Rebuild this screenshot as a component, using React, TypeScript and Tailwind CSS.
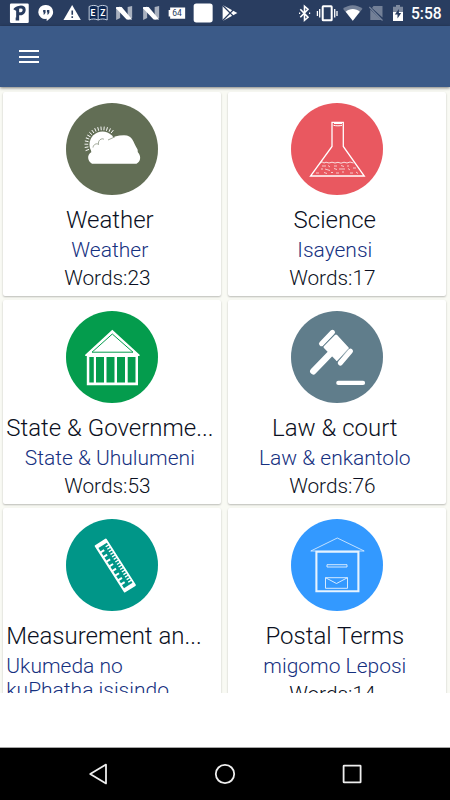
import type { ReactNode } from "react";
import clsx from "clsx";

type Category = {
    title: string;
    subtitle: string;
    words?: number;
    color: string;
    icon: ReactNode;
    alignLeft?: boolean;
};

const sunRays = Array.from({ length: 15 }, (_, i) => 160 + i * 10.5);
const longTicks = [9, 14.5, 20, 25.5, 31, 36.5, 42, 47];
const shortTicks = [7, 10, 13, 16, 19, 22, 25, 28, 31, 34, 37, 40, 43, 46, 49];

const WeatherIcon = () => (
    <g>
        {sunRays.map((a) => (
            <path key={a} d="M14.3 0H18" stroke="white" strokeWidth=".9" transform={`translate(36.5 41.5) rotate(${a})`} />
        ))}
        <circle cx="36.5" cy="41.5" r="13" fill="white" />
        <path
            d="M26 60.7C21.5 58 20.5 52 25.5 49C24 44 27 41 30.5 42C31.5 37 36 35.5 40 38C46 34 52 32.3 58 32.3C67 32.5 67 39 71 45.5C72.5 48 71 48.5 72.5 50C75.3 54 74.5 58.5 70.5 60.7Z"
            fill="white"
        />
        <path d="M27 44.5C27.5 41 31 40 32.5 41.5C31.5 37 36.5 34.5 38 36.5M42 37L49 33.8" fill="none" stroke="#626e55" strokeWidth=".6" />
    </g>
);

const ScienceIcon = () => (
    <g fill="none" stroke="white">
        <path d="M41 19.3H52.3V43.5L73.3 73H19.5L41 43.5Z" strokeWidth="1.3" />
        <path d="M42.5 22.3C45 23 49 23 51 22.3M43 20.5H51" strokeWidth="1" />
        <path d="M29.5 60L31 58.8L33 60L35 59.2L38 60L41 59.2L44 60L47 59.3L50 60.2L53 59.2L56 60L59 59L62.5 60" strokeWidth=".8" />
        <path
            d="M31 63H35M37 62.5L39 64M43 63H46M50 62.5L53 63.5M56 63H58M30 66H32M34 66L39 67.5M43 65.5L46 66.5M48 66H54M57 65.5L59 67M62 65H65M25 70H28M33 69.5L36 70.5M40 69.5H42M45 70H48M51 69H53M59 70H62M65 69L67 70.5"
            strokeWidth=".8"
            opacity=".85"
        />
    </g>
);

const StateIcon = () => (
    <g>
        <path d="M46.3 18.7L73.6 43.8V45H72V74.3H20.8V45H19.2V43.8Z" fill="white" />
        <path d="M46.3 23L67 41.2H26Z" fill="none" stroke="#049c4d" strokeWidth="1" />
        <path d="M23.3 46H27.8V71.6H23.3ZM30 46H38V71.6H30ZM40.5 46H48.5V71.6H40.5ZM51 46H59V71.6H51ZM61.7 46H69.5V71.6H61.7Z" fill="#049c4d" />
    </g>
);

const LawIcon = () => (
    <g fill="none" stroke="white" strokeLinecap="round">
        <path d="M41.5 21.3L30.5 32.7M59.5 40.2L49.3 52" strokeWidth="5" />
        <path d="M45 25L56.5 37.5L46 48.3L34 36Z" fill="white" strokeWidth="3" strokeLinejoin="round" />
        <path d="M38.5 43.5L22.3 60.3" strokeWidth="6.4" />
        <path d="M43.7 23.2L32.3 35.2M57.8 37.5L46.8 49.7" stroke="#607d8b" strokeWidth=".6" />
        <path d="M47.3 71.9H72" strokeWidth="4.2" />
    </g>
);

const RulerIcon = () => (
    <g transform="matrix(.538 .843 .843 -.538 28.3 26.7)">
        <rect width="56" height="14" rx="1" fill="white" />
        <rect x="4.2" y="2.2" width="47.6" height="10" fill="#009688" />
        {longTicks.map((x) => (
            <path key={x} d={`M${x} 1V6`} stroke="white" strokeWidth="2" />
        ))}
        {shortTicks.map((x) => (
            <path key={x} d={`M${x} 13V9`} stroke="white" strokeWidth="1.3" />
        ))}
    </g>
);

const PostalIcon = () => (
    <g fill="none" stroke="#e6f3ff">
        <path d="M19.8 32L46.3 19L73.2 32Z" strokeWidth=".8" />
        <path d="M25.4 32.8H67.4V72.3H25.4Z" strokeWidth="2.1" />
        <path d="M36 45.7H56V48H36ZM34.5 58.7H56.5V69.3H34.5ZM34.5 58.7L45.5 64.5L56.5 58.7" strokeWidth=".9" />
    </g>
);

const categories: Category[] = [
    { title: "Weather", subtitle: "Weather", words: 23, color: "#626e55", icon: <WeatherIcon /> },
    { title: "Science", subtitle: "Isayensi", words: 17, color: "#e95860", icon: <ScienceIcon /> },
    { title: "State & Governme...", subtitle: "State & Uhulumeni", words: 53, color: "#049c4d", icon: <StateIcon /> },
    { title: "Law & court", subtitle: "Law & enkantolo", words: 76, color: "#607d8b", icon: <LawIcon /> },
    { title: "Measurement an...", subtitle: "Ukumeda no kuPhatha isisindo", color: "#009688", icon: <RulerIcon />, alignLeft: true },
    { title: "Postal Terms", subtitle: "migomo Leposi", words: 14, color: "#3399ff", icon: <PostalIcon /> },
];

const NotificationIcon = ({ children }: { children: ReactNode }) => (
    <svg viewBox="0 0 26 26" className="h-[26px] w-[26.3px] shrink-0" fill="white">
        {children}
    </svg>
);

const SystemIcon = ({ children }: { children: ReactNode }) => (
    <svg viewBox="0 0 23 26" className="h-[26px] w-[23px] shrink-0 overflow-visible" fill="white">
        {children}
    </svg>
);

const NougatIcon = () => (
    <NotificationIcon>
        <path d="M5 8L9 6.5V18L5 20ZM16.5 7L21 6V18L16.5 20Z" opacity=".6" />
        <path d="M5 7H10.5L21 19.5H15.5L5 8.5Z" />
    </NotificationIcon>
);

function StatusBar() {
    return (
        <div className="flex h-[26px] items-center bg-[#293d60] pl-[6.3px] pr-[9px]">
            <NotificationIcon>
                <rect x="3.8" y="3.5" width="18.8" height="19.5" rx="1.3" />
                <path
                    d="M11.5 19V8.5M8.5 10C10 7 17.5 5.5 18 9.5C18.3 13 15 14.5 12 13.5M9.5 19H13"
                    fill="none"
                    stroke="#293d60"
                    strokeWidth="3"
                />
            </NotificationIcon>
            <NotificationIcon>
                <path d="M13 5A7 7 0 0 1 20 12C20 16 16.5 19 13.5 21V18.8A7 7 0 1 1 13 5Z" />
                <path d="M10 10H12.4V12.8L11.2 14.5H10.2L10.8 12.5H10ZM13.8 10H16.2V12.8L15 14.5H14L14.6 12.5H13.8Z" fill="#293d60" />
            </NotificationIcon>
            <NotificationIcon>
                <path d="M13 5L21.7 20H4.3Z" />
                <path d="M12.3 10.5H13.9V14.8H12.3ZM12.3 16.3H13.9V18H12.3Z" fill="#293d60" />
            </NotificationIcon>
            <NotificationIcon>
                <path
                    d="M4 6.5C7 5 10.5 5 13 6.7C15.5 5 19 5 22 6.5V20C19 18.6 16 18.7 13 20C10 18.7 7 18.6 4 20ZM13 6.7V20"
                    fill="#0d2854"
                    stroke="#c4cfdf"
                    strokeWidth="1"
                />
                <text x="5.4" y="16.1" fontSize="8.5" fontWeight="700">E</text>
                <text x="15" y="16.1" fontSize="8.5" fontWeight="700">Z</text>
            </NotificationIcon>
            <NougatIcon />
            <NougatIcon />
            <NotificationIcon>
                <path d="M6 7.5H21V18.8H6V16.5H4.5V10H6Z" />
                <text x="8.2" y="16.2" fontSize="8.5" fill="#293d60">64</text>
            </NotificationIcon>
            <NotificationIcon>
                <rect x="3.5" y="3.4" width="19" height="19" rx="2.7" />
            </NotificationIcon>
            <NotificationIcon>
                <path d="M5.5 5L20.2 13L5.5 21Z" />
                <path d="M5 5L16 16M5 21L16 10" stroke="#293d60" strokeWidth="1.2" />
            </NotificationIcon>
            <div className="ml-auto flex items-center">
                <SystemIcon>
                    <path d="M7.3 9.3L15 17.3L11.5 20.3V6.2L15 9.3L7.3 17.3M6 13.2H7.2M16 13.2H17.2" fill="none" stroke="white" strokeWidth="1.6" />
                </SystemIcon>
                <SystemIcon>
                    <rect x="6.7" y="6.3" width="9" height="14" rx=".6" fill="none" stroke="white" strokeWidth="2" />
                    <path d="M3.7 9V17.5M1.4 11V16M18.7 9V17.5M21 11V16" stroke="white" strokeWidth="1.3" />
                </SystemIcon>
                <SystemIcon>
                    <path d="M4 8.7C9.5 4 18 4 23.5 8.7L13.8 20.7Z" opacity=".35" />
                    <path d="M6.7 11.7C10.5 8 17.1 8 20.8 11.7L13.8 20.7Z" />
                </SystemIcon>
                <SystemIcon>
                    <path d="M11.5 6H20.5V17.5L10 8ZM8.3 9.5L19.5 20H8.3Z" opacity=".35" />
                    <path d="M7.3 7L20.5 20.5" stroke="#77859c" strokeWidth="1.1" />
                </SystemIcon>
                <SystemIcon>
                    <path d="M8 6.8H11V5H15V6.8H18V12H8Z" opacity=".4" />
                    <path d="M8 12H18V21H8Z" />
                    <path d="M13.9 9L9.8 14.5H12.5V18.5L16.2 13H13.9Z" fill="#293d60" />
                </SystemIcon>
                <span className="mt-[2px] ml-[3px] w-[30px] whitespace-nowrap text-[15.6px] leading-[26px] font-medium text-white">5:58</span>
            </div>
        </div>
    );
}

function CategoryCard({ title, subtitle, words, color, icon, alignLeft }: Category) {
    return (
        <div className="h-[204.5px] overflow-hidden rounded-[2px] bg-white pt-[11.5px] shadow-[0_1px_2px_rgba(0,0,0,0.25)]">
            <svg viewBox="0 0 92 92" className="mx-auto size-[92px]">
                <circle cx="46" cy="46" r="46" fill={color} />
                {icon}
            </svg>
            <div className={clsx("pr-[8px] pl-[3px] font-light", alignLeft ? "text-left" : "text-center")}>
                <h2 className="mt-[10px] h-[30px] whitespace-nowrap text-[24px] leading-[30px] text-[#0b1022]">{title}</h2>
                <p className="mt-[3px] text-[21px] leading-[24px] text-[#16317f]">{subtitle}</p>
                {words && <p className="mt-[4px] pr-[5px] text-[20.8px] leading-[24px] text-[#0b1022]">Words:{words}</p>}
            </div>
        </div>
    );
}

export default function App() {
    return (
        <div className="flex h-[800px] w-[450px] flex-col overflow-hidden bg-white font-[Roboto,sans-serif]">
            <StatusBar />
            <header className="z-10 flex h-[61px] shrink-0 items-center bg-[#3b5a88] pl-[18.5px] shadow-[0_1px_3px_rgba(0,0,0,0.5)]">
                <button aria-label="Open menu" className="flex w-[20px] flex-col gap-[3.5px]">
                    <span className="h-[2px] bg-white"></span>
                    <span className="h-[2px] bg-white"></span>
                    <span className="h-[2px] bg-white"></span>
                </button>
            </header>

            <main className="grid h-[606px] shrink-0 auto-rows-[204.5px] grid-cols-[218px_218px] gap-x-[7px] gap-y-[3.5px] overflow-hidden bg-[#f9faf4] pt-[4.5px] pl-[3.3px]">
                {categories.map((category) => (
                    <CategoryCard key={category.title} {...category} />
                ))}
            </main>

            <nav className="mt-auto flex h-[53px] shrink-0 items-center justify-between border-t border-[#a5a5a5] bg-black px-[85px]">
                <svg viewBox="0 0 26 26" className="size-[26px]">
                    <path d="M5.2 13L21 3.6V22.4Z" fill="none" stroke="#eee" strokeWidth="1.8" strokeLinejoin="round" />
                </svg>
                <svg viewBox="0 0 26 26" className="size-[26px]">
                    <circle cx="13" cy="13" r="9.2" fill="none" stroke="#eee" strokeWidth="1.8" />
                </svg>
                <svg viewBox="0 0 26 26" className="size-[26px]">
                    <rect x="4.6" y="4.6" width="17" height="16.8" rx=".5" fill="none" stroke="#eee" strokeWidth="1.8" />
                </svg>
            </nav>
        </div>
    );
}
